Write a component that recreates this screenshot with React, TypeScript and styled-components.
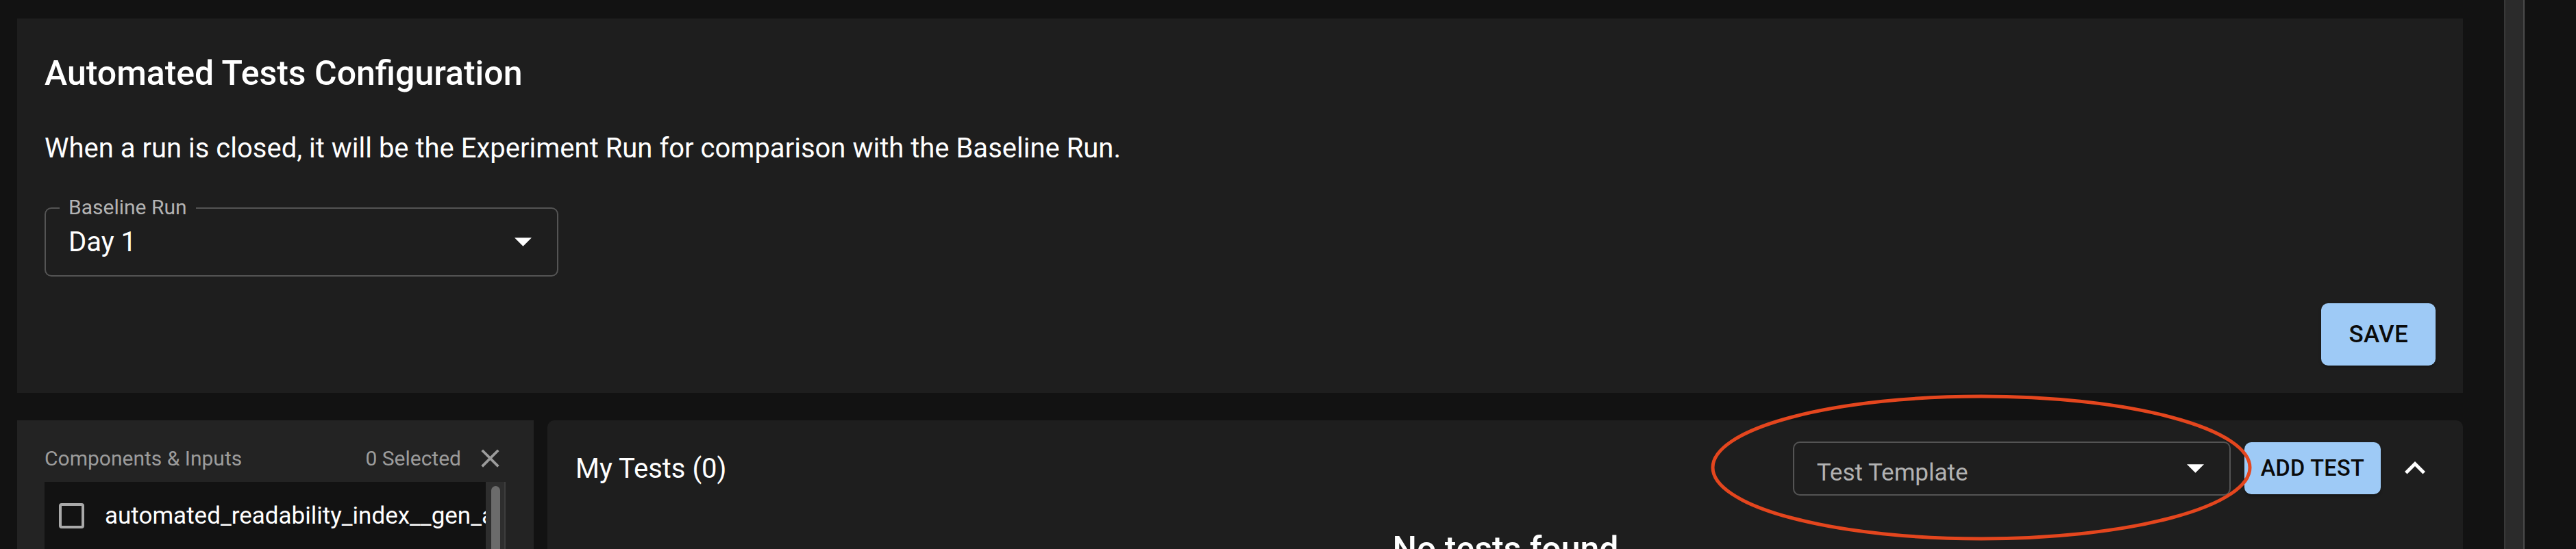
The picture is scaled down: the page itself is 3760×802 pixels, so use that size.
import React from 'react';
import styled, { createGlobalStyle } from 'styled-components';

const GlobalStyle = createGlobalStyle`
  html, body {
    margin: 0;
    padding: 0;
    background: #121212;
    font-family: Roboto, "Liberation Sans", Arial, sans-serif;
    color: #fff;
  }
`;

const Page = styled.div`
  position: relative;
  display: flex;
  width: 3760px;
  height: 802px;
  overflow: hidden;
  background: #121212;
`;

const Content = styled.div`
  width: 3655px;
  flex-shrink: 0;
  box-sizing: border-box;
  padding: 27px 60px 0 25px;
`;

const PageScrollbar = styled.div`
  width: 30px;
  flex-shrink: 0;
  box-sizing: border-box;
  background: #2b2b2b;
  border-left: 2px solid #383838;
  border-right: 2px solid #4a4a4a;
`;

const ConfigPanel = styled.section`
  height: 547px;
  box-sizing: border-box;
  padding: 40px;
  display: flex;
  flex-direction: column;
  align-items: flex-start;
  background: #1e1e1e;
`;

const Title = styled.h2`
  margin: 0 0 40px;
  font-size: 50px;
  font-weight: 500;
  line-height: 80px;
`;

const Description = styled.p`
  margin: 0;
  font-size: 40px;
  line-height: 60px;
`;

const OutlinedSelect = styled.div<{ $width: number; $height: number; $muted?: boolean }>`
  position: relative;
  display: flex;
  align-items: center;
  width: ${(p) => p.$width}px;
  height: ${(p) => p.$height}px;
  box-sizing: border-box;
  border: 2px solid #545454;
  border-radius: 10px;
  padding: 0 37px 0 33px;
  color: ${(p) => (p.$muted ? '#b2b2b2' : '#fff')};
`;

const FloatingLabel = styled.span`
  position: absolute;
  left: 20px;
  top: -22px;
  padding: 0 13px;
  background: #1e1e1e;
  color: #b3b3b3;
  font-size: 30px;
  line-height: 40px;
`;

const SelectValue = styled.span<{ $size: number; $shift?: number }>`
  flex: 1;
  font-size: ${(p) => p.$size}px;
  line-height: 1;
  padding-top: ${(p) => p.$shift ?? 0}px;
  white-space: nowrap;
`;

const PrimaryButton = styled.button<{ $height: number; $font: number; $pad: number }>`
  height: ${(p) => p.$height}px;
  padding: 0 ${(p) => p.$pad}px;
  border: none;
  border-radius: 10px;
  background: #9ecaf6;
  color: #0b0b0b;
  font-family: Roboto, "Liberation Sans", Arial, sans-serif;
  font-size: ${(p) => p.$font}px;
  font-weight: 500;
  letter-spacing: 0.3px;
  text-transform: uppercase;
  box-shadow: 0 5px 3px -2px rgba(0, 0, 0, 0.2), 0 2px 5px rgba(0, 0, 0, 0.14);
  white-space: nowrap;
`;

const SaveButton = styled(PrimaryButton)`
  margin-top: auto;
  align-self: flex-end;
`;

const BottomRow = styled.div`
  display: flex;
  gap: 20px;
  margin-top: 40px;
  height: 400px;
`;

const ComponentsCard = styled.aside`
  width: 754px;
  flex-shrink: 0;
  box-sizing: border-box;
  padding: 30px 41px 0 40px;
  background: #232323;
`;

const CardHeader = styled.div`
  display: flex;
  align-items: center;
  height: 50px;
  margin-bottom: 10px;
  color: #9c9c9c;
  font-size: 30px;
`;

const HeaderLabel = styled.span`
  flex: 1;
`;

const SelectedCount = styled.span`
  margin-right: 20px;
`;

const IconBox = styled.span<{ $size: number }>`
  display: flex;
  align-items: center;
  justify-content: center;
  width: ${(p) => p.$size}px;
  height: ${(p) => p.$size}px;
  flex-shrink: 0;
`;

const ListBox = styled.div`
  display: flex;
  height: 300px;
  background: #121212;
`;

const ListItems = styled.div`
  flex: 1;
  min-width: 0;
  overflow: hidden;
`;

const ListItem = styled.label`
  display: flex;
  align-items: center;
  gap: 30px;
  padding: 29px 0 0 21px;
`;

const CheckBox = styled.span`
  width: 37px;
  height: 37px;
  flex-shrink: 0;
  box-sizing: border-box;
  border: 4px solid #a9a9a9;
  border-radius: 4px;
`;

const ItemText = styled.span`
  font-size: 35px;
  white-space: nowrap;
`;

const ListTrack = styled.div`
  width: 29px;
  flex-shrink: 0;
  box-sizing: border-box;
  padding: 6px 6px 0 8px;
  background: #2e2e2e;
  border-right: 2px solid #3d3d3d;
`;

const ListThumb = styled.div`
  height: 200px;
  border-radius: 8px;
  background: #6b6b6b;
`;

const TestsCard = styled.section`
  flex: 1;
  box-sizing: border-box;
  padding: 30px 40px 0 41px;
  background: #1e1e1e;
  border-radius: 10px 10px 0 0;
`;

const TestsHeader = styled.div`
  display: flex;
  align-items: center;
  gap: 20px;
  height: 80px;
`;

const TestsTitle = styled.span`
  flex: 1;
  font-size: 40px;
`;

const EmptyText = styled.div`
  margin-top: 38px;
  text-align: center;
  font-size: 50px;
  font-weight: 500;
  line-height: 80px;
`;

const Annotation = styled.svg`
  position: absolute;
  left: 0;
  top: 0;
  pointer-events: none;
`;

const DropArrow = () => (
  <svg width="25" height="13" viewBox="0 0 10 5" fill="#fff">
    <path d="M0 0l5 5 5-5z" />
  </svg>
);

export default function App() {
  return (
    <>
      <GlobalStyle />
      <Page>
        <Content>
          <ConfigPanel>
            <Title>Automated Tests Configuration</Title>
            <Description>
              When a run is closed, it will be the Experiment Run for comparison with the Baseline Run.
            </Description>
            <OutlinedSelect $width={750} $height={101} style={{ marginTop: 56 }}>
              <FloatingLabel>Baseline Run</FloatingLabel>
              <SelectValue $size={40}>Day 1</SelectValue>
              <DropArrow />
            </OutlinedSelect>
            <SaveButton $height={91} $font={35} $pad={40}>Save</SaveButton>
          </ConfigPanel>

          <BottomRow>
            <ComponentsCard>
              <CardHeader>
                <HeaderLabel>Components &amp; Inputs</HeaderLabel>
                <SelectedCount>0 Selected</SelectedCount>
                <IconBox $size={45}>
                  <svg width="45" height="45" viewBox="0 0 24 24" fill="#9c9c9c">
                    <path d="M19 6.41 17.59 5 12 10.59 6.41 5 5 6.41 10.59 12 5 17.59 6.41 19 12 13.41 17.59 19 19 17.59 13.41 12z" />
                  </svg>
                </IconBox>
              </CardHeader>
              <ListBox>
                <ListItems>
                  <ListItem>
                    <CheckBox />
                    <ItemText>automated_readability_index__gen_answer</ItemText>
                  </ListItem>
                </ListItems>
                <ListTrack>
                  <ListThumb />
                </ListTrack>
              </ListBox>
            </ComponentsCard>

            <TestsCard>
              <TestsHeader>
                <TestsTitle>My Tests (0)</TestsTitle>
                <OutlinedSelect $width={639} $height={79} $muted>
                  <SelectValue $size={35} $shift={12}>Test Template</SelectValue>
                  <DropArrow />
                </OutlinedSelect>
                <PrimaryButton $height={76} $font={32.5} $pad={24}>Add Test</PrimaryButton>
                <IconBox $size={60}>
                  <svg width="60" height="60" viewBox="0 0 24 24" fill="#fff">
                    <path d="m12 8-6 6 1.41 1.41L12 10.83l4.59 4.58L18 14z" />
                  </svg>
                </IconBox>
              </TestsHeader>
              <EmptyText>No tests found</EmptyText>
            </TestsCard>
          </BottomRow>
        </Content>
        <PageScrollbar />
        <Annotation width="3760" height="802" viewBox="0 0 3760 802">
          <ellipse cx="2892" cy="683" rx="392" ry="104" fill="none" stroke="#e4461e" strokeWidth="5" />
        </Annotation>
      </Page>
    </>
  );
}
